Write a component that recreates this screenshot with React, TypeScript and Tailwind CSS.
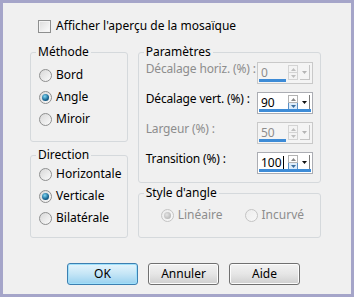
import { ReactNode } from 'react';

function Radio({ checked, disabled }: { checked?: boolean; disabled?: boolean }) {
  return (
    <span
      className={`w-[13px] h-[13px] rounded-full border flex items-center justify-center shrink-0 bg-linear-to-br ${
        disabled ? 'border-[#c4c4c4] from-[#ececec] to-[#f8f8f8]' : 'border-[#8e8f8f] from-[#d8d8d8] to-[#fbfbfb]'
      }`}
    >
      {checked && (
        <span
          className={`w-[7px] h-[7px] rounded-full ${
            disabled
              ? 'bg-[radial-gradient(circle_at_40%_40%,#e4e4e4,#a8a8a8)]'
              : 'bg-[radial-gradient(circle_at_40%_35%,#7fd8f5,#16628f_60%,#0b3b5c)]'
          }`}
        />
      )}
    </span>
  );
}

function RadioRow({ label, checked, disabled }: { label: string; checked?: boolean; disabled?: boolean }) {
  return (
    <div className="flex items-center gap-[4px] h-[22px]">
      <Radio checked={checked} disabled={disabled} />
      <span className={disabled ? 'text-[#8d8d8d]' : ''}>{label}</span>
    </div>
  );
}

function Group({ title, className, children }: { title: string; className: string; children: ReactNode }) {
  return (
    <fieldset className={`border border-[#d5d9dc] rounded-[3px] ${className}`}>
      <legend className="ml-[5px] px-[2px] leading-[16px]">{title}</legend>
      {children}
    </fieldset>
  );
}

function Spinner({ value, disabled, full, caret }: { value: string; disabled?: boolean; full?: boolean; caret?: boolean }) {
  return (
    <div
      className={`relative w-[56px] h-[22px] border flex items-start ${
        disabled ? 'border-[#c9c9c9] bg-[#f4f4f4] text-[#8d8d8d]' : 'border-[#abadb3] bg-white text-black'
      }`}
    >
      <div className="flex-1 pl-[3px] pt-[2px] leading-[15px] flex items-center">
        {value}
        {caret && <span className="w-px h-[13px] bg-black ml-px" />}
      </div>
      <div className="flex pt-[2px] pr-[2px] gap-[2px]">
        <div className="flex flex-col w-[10px]">
          <div className={`h-[8px] border flex items-center justify-center ${disabled ? 'border-[#d4d4d4]' : 'border-[#b3b3b3]'}`}>
            <svg width="5" height="3" viewBox="0 0 5 3">
              <path d="M0 3 L2.5 0 L5 3 Z" fill={disabled ? '#c0c0c0' : '#8a8a8a'} />
            </svg>
          </div>
          <div
            className={`h-[7px] border border-t-0 flex items-center justify-center ${
              disabled ? 'border-[#d4d4d4]' : 'border-[#5b8fc4] bg-[#dcecfa]'
            }`}
          >
            <svg width="5" height="3" viewBox="0 0 5 3">
              <path d="M0 0 L5 0 L2.5 3 Z" fill={disabled ? '#c0c0c0' : '#3b6e9e'} />
            </svg>
          </div>
        </div>
        <div
          className={`w-[10px] h-[15px] border-r border-b flex items-center justify-center ${
            disabled ? 'border-[#c4c4c4]' : 'border-[#7a7a7a]'
          }`}
        >
          <svg width="5" height="3" viewBox="0 0 5 3">
            <path d="M0 0 L5 0 L2.5 3 Z" fill={disabled ? '#b4b4b4' : '#111'} />
          </svg>
        </div>
      </div>
      <div className={`absolute left-[1px] bottom-[1px] h-[3px] bg-[#3d8bd6] ${full ? 'w-[52px]' : 'w-[27px]'}`} />
    </div>
  );
}

function ParamRow({ label, disabled, children }: { label: string; disabled?: boolean; children: ReactNode }) {
  return (
    <div className="flex items-start justify-between h-[22px]">
      <span className={`leading-[14px] tracking-[-0.15px] ${disabled ? 'text-[#8d8d8d]' : ''}`}>{label}</span>
      {children}
    </div>
  );
}

function Button({ label, primary }: { label: string; primary?: boolean }) {
  return (
    <button
      className={`w-[71px] h-[22px] rounded-[3px] border flex items-center justify-center ${
        primary
          ? 'border-[#3c7fb1] bg-linear-to-b from-[#e5f4fc] via-[#c4e5f6] to-[#98d1ef] shadow-[inset_0_0_0_1px_#9fe0fb]'
          : 'border-[#707070] bg-linear-to-b from-[#f2f2f2] via-[#e6e6e6] to-[#cfcfcf] shadow-[inset_0_0_0_1px_#fcfcfc]'
      }`}
    >
      {label}
    </button>
  );
}

export default function App() {
  return (
    <div className="w-[354px] h-[297px] overflow-hidden border-[3px] border-[#a5a5c9] bg-[#f0f0f0] text-[12px] text-black font-['Noto_Sans','Liberation_Sans',sans-serif] pt-[13px] pl-[27px] pr-[30px]">
      <div className="flex items-center h-[20px] ml-[8px] gap-[5px]">
        <span className="w-[13px] h-[13px] border border-[#8e8f8f] bg-linear-to-br from-[#dcdcdc] to-[#fdfdfd] shadow-[inset_0_0_0_1px_#f4f4f4]" />
        <span>Afficher l'aperçu de la mosaïque</span>
      </div>

      <div className="flex gap-[10px] mt-[8px]">
        <div className="w-[98px] flex flex-col">
          <Group title="Méthode" className="h-[98px]">
            <div className="pl-[8px] pt-[4px]">
              <RadioRow label="Bord" />
              <RadioRow label="Angle" checked />
              <RadioRow label="Miroir" />
            </div>
          </Group>
          <Group title="Direction" className="mt-[5px] h-[91px]">
            <div className="pl-[8px]">
              <RadioRow label="Horizontale" />
              <RadioRow label="Verticale" checked />
              <RadioRow label="Bilatérale" />
            </div>
          </Group>
        </div>

        <div className="w-[184px] flex flex-col">
          <Group title="Paramètres" className="h-[139px]">
            <div className="flex flex-col gap-[8px] px-[7px] pt-[2px]">
              <ParamRow label="Décalage horiz. (%) :" disabled>
                <Spinner value="0" disabled />
              </ParamRow>
              <ParamRow label="Décalage vert. (%) :">
                <Spinner value="90" full />
              </ParamRow>
              <ParamRow label="Largeur (%) :" disabled>
                <Spinner value="50" disabled />
              </ParamRow>
              <ParamRow label="Transition (%) :">
                <Spinner value="100" full caret />
              </ParamRow>
            </div>
          </Group>
          <Group title="Style d'angle" className="mt-[2px] h-[53px]">
            <div className="flex gap-[22px] pt-[3px] pl-[22px]">
              <RadioRow label="Linéaire" checked disabled />
              <RadioRow label="Incurvé" disabled />
            </div>
          </Group>
        </div>
      </div>

      <div className="flex gap-[10px] mt-[25px] ml-[37px]">
        <Button label="OK" primary />
        <Button label="Annuler" />
        <Button label="Aide" />
      </div>
    </div>
  );
}
